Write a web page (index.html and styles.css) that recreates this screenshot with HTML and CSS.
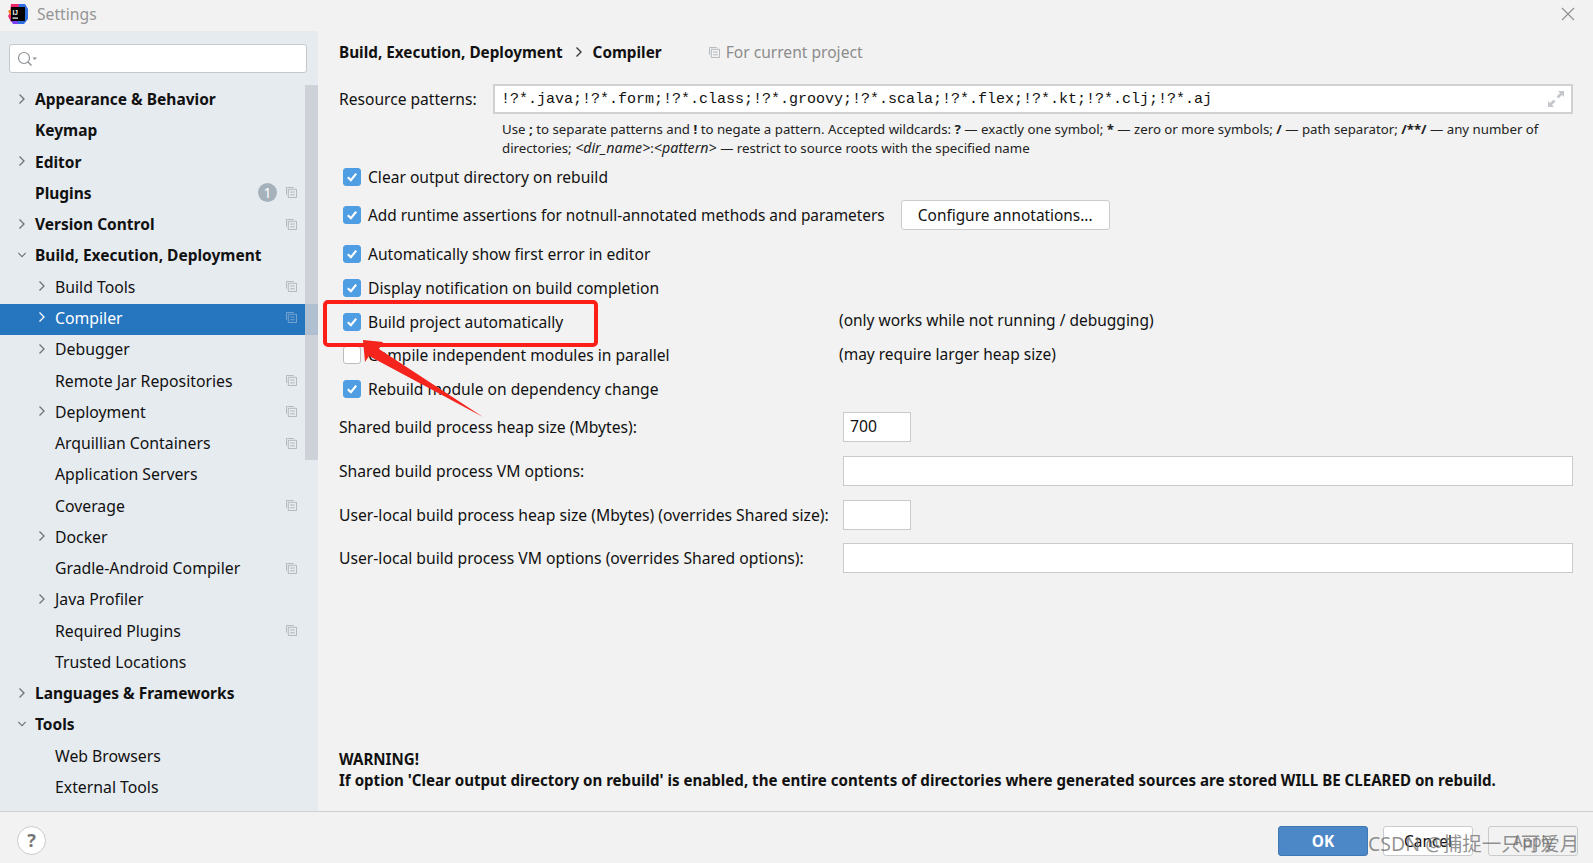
FILE: index.html
```html
<!DOCTYPE html>
<html lang="en">
<head>
<meta charset="utf-8">
<title>Settings</title>
<link rel="stylesheet" href="styles.css">
</head>
<body>
<svg class="defs" width="0" height="0" aria-hidden="true">
  <symbol id="copy" viewBox="0 0 12 12"><path d="M.5 8.5V.5h8" fill="none" stroke="currentColor"/><path d="M2.5 2.5h9v9h-9z" fill="none" stroke="currentColor"/><path d="M4.5 5.5h5M4.5 8.5h5" stroke="currentColor"/></symbol>
  <symbol id="right" viewBox="0 0 10 12"><path d="M2.5 1.5 7 6l-4.500 4.500" fill="none" stroke="currentColor" stroke-width="1.300"/></symbol>
  <symbol id="down" viewBox="0 0 12 10"><path d="M1.500 2.500 6 7l4.500-4.500" fill="none" stroke="currentColor" stroke-width="1.300"/></symbol>
  <symbol id="tick" viewBox="0 0 18 18"><path d="M4.800 9.200 7.900 12.200 13.200 5.600" fill="none" stroke="#fff" stroke-width="2.200"/></symbol>
</svg>
<div class="window">
  <header class="titlebar">
    <svg class="logo" viewBox="0 0 20 20" width="20" height="20">
      <path d="M3 0h8l2 3-3 15H3L0 12l2-3z" fill="#f0246c"/>
      <path d="M11 0h6l3 5v10l-4 5H8z" fill="#2f6fe0"/>
      <path d="M0 7l4-2v9z" fill="#f97a12"/>
      <path d="M2 15h8v5H5z" fill="#7a3df0"/>
      <rect x="3" y="3" width="14" height="14" fill="#000"/>
      <text x="4.500" y="10.500" class="logo-text">IJ</text>
      <rect x="4.500" y="13.500" width="5.500" height="1.200" fill="#fff"/>
    </svg>
    <span class="title">Settings</span>
    <svg class="close" viewBox="0 0 14 14" width="14" height="14"><path d="M1 1l12 12M13 1 1 13" stroke="#8f8f8f" stroke-width="1.100" fill="none"/></svg>
  </header>
  <div class="body">
    <aside class="sidebar">
      <div class="search">
        <svg viewBox="0 0 22 16" width="22" height="16"><circle cx="7" cy="7" r="5.500" fill="none" stroke="#8b9298" stroke-width="1.200"/><path d="M11 11l3.500 3.500" stroke="#8b9298" stroke-width="1.400"/><path d="M15.500 6.500h4.500l-2.250 2.500z" fill="#8b9298"/></svg>
      </div>
      <div class="tree">
        <div class="scrollbar"></div>
        <div class="row l0 bold"><svg class="arrow"><use href="#right"/></svg><span class="name">Appearance &amp; Behavior</span></div>
        <div class="row l0 bold"><span class="name">Keymap</span></div>
        <div class="row l0 bold"><svg class="arrow"><use href="#right"/></svg><span class="name">Editor</span></div>
        <div class="row l0 bold"><span class="name">Plugins</span><span class="badge">1</span><svg class="cp"><use href="#copy"/></svg></div>
        <div class="row l0 bold"><svg class="arrow"><use href="#right"/></svg><span class="name">Version Control</span><svg class="cp"><use href="#copy"/></svg></div>
        <div class="row l0 bold"><svg class="arrow"><use href="#down"/></svg><span class="name">Build, Execution, Deployment</span></div>
        <div class="row l1"><svg class="arrow"><use href="#right"/></svg><span class="name">Build Tools</span><svg class="cp"><use href="#copy"/></svg></div>
        <div class="row l1 selected"><svg class="arrow"><use href="#right"/></svg><span class="name">Compiler</span><svg class="cp"><use href="#copy"/></svg></div>
        <div class="row l1"><svg class="arrow"><use href="#right"/></svg><span class="name">Debugger</span></div>
        <div class="row l1"><span class="name">Remote Jar Repositories</span><svg class="cp"><use href="#copy"/></svg></div>
        <div class="row l1"><svg class="arrow"><use href="#right"/></svg><span class="name">Deployment</span><svg class="cp"><use href="#copy"/></svg></div>
        <div class="row l1"><span class="name">Arquillian Containers</span><svg class="cp"><use href="#copy"/></svg></div>
        <div class="row l1"><span class="name">Application Servers</span></div>
        <div class="row l1"><span class="name">Coverage</span><svg class="cp"><use href="#copy"/></svg></div>
        <div class="row l1"><svg class="arrow"><use href="#right"/></svg><span class="name">Docker</span></div>
        <div class="row l1"><span class="name">Gradle-Android Compiler</span><svg class="cp"><use href="#copy"/></svg></div>
        <div class="row l1"><svg class="arrow"><use href="#right"/></svg><span class="name">Java Profiler</span></div>
        <div class="row l1"><span class="name">Required Plugins</span><svg class="cp"><use href="#copy"/></svg></div>
        <div class="row l1"><span class="name">Trusted Locations</span></div>
        <div class="row l0 bold"><svg class="arrow"><use href="#right"/></svg><span class="name">Languages &amp; Frameworks</span></div>
        <div class="row l0 bold"><svg class="arrow"><use href="#down"/></svg><span class="name">Tools</span></div>
        <div class="row l1"><span class="name">Web Browsers</span></div>
        <div class="row l1"><span class="name">External Tools</span></div>
      </div>
    </aside>
    <main class="content">
      <div class="crumbs">
        <b>Build, Execution, Deployment</b>
        <svg class="crumb-arrow"><use href="#right"/></svg>
        <b>Compiler</b>
        <svg class="cp crumb-cp"><use href="#copy"/></svg>
        <span class="muted">For current project</span>
      </div>
      <div class="resource">
        <label class="resource-label">Resource patterns:</label>
        <div class="resource-input"><span>!?*.java;!?*.form;!?*.class;!?*.groovy;!?*.scala;!?*.flex;!?*.kt;!?*.clj;!?*.aj</span>
          <svg viewBox="0 0 16 16" width="16" height="16"><path d="M16 0h-6l2 2-3.500 3.500 2 2L14 4l2 2zM0 16h6l-2-2 3.500-3.500-2-2L2 12l-2-2z" fill="#c4c8cc"/></svg>
        </div>
      </div>
      <p class="hint">Use <b>;</b> to separate patterns and <b>!</b> to negate a pattern. Accepted wildcards: <b>?</b> — exactly one symbol; <b>*</b> — zero or more symbols; <b>/</b> — path separator; <b>/**/</b> — any number of<br>directories; <i>&lt;dir_name&gt;</i>:<i>&lt;pattern&gt;</i> — restrict to source roots with the specified name</p>
      <div class="check c1"><span class="box on"><svg><use href="#tick"/></svg></span><span>Clear output directory on rebuild</span></div>
      <div class="check c2"><span class="box on"><svg><use href="#tick"/></svg></span><span class="long">Add runtime assertions for notnull-annotated methods and parameters</span><button class="btn configure">Configure annotations...</button></div>
      <div class="check c3"><span class="box on"><svg><use href="#tick"/></svg></span><span>Automatically show first error in editor</span></div>
      <div class="check c4"><span class="box on"><svg><use href="#tick"/></svg></span><span>Display notification on build completion</span></div>
      <div class="check c4"><span class="box on"><svg><use href="#tick"/></svg></span><span class="lab">Build project automatically</span><span class="note">(only works while not running / debugging)</span></div>
      <div class="check c4"><span class="box"></span><span class="lab">Compile independent modules in parallel</span><span class="note">(may require larger heap size)</span></div>
      <div class="check c4"><span class="box on"><svg><use href="#tick"/></svg></span><span>Rebuild module on dependency change</span></div>
      <div class="field f1"><label>Shared build process heap size (Mbytes):</label><div class="input small">700</div></div>
      <div class="field"><label>Shared build process VM options:</label><div class="input"></div></div>
      <div class="field"><label>User-local build process heap size (Mbytes) (overrides Shared size):</label><div class="input small"></div></div>
      <div class="field"><label>User-local build process VM options (overrides Shared options):</label><div class="input"></div></div>
      <div class="warning"><b>WARNING!</b><br><b>If option 'Clear output directory on rebuild' is enabled, the entire contents of directories where generated sources are stored WILL BE CLEARED on rebuild.</b></div>
    </main>
  </div>
  <footer class="footer">
    <span class="help">?</span>
    <div class="buttons">
      <button class="btn primary">OK</button>
      <button class="btn cancel">Cancel</button>
      <button class="btn apply">Apply</button>
    </div>
  </footer>
</div>
<div class="red-box"></div>
<svg class="red-arrow" viewBox="0 0 140 90" width="140" height="90"><path d="M5 4 25 6 21 13 125 81 11 20 7 26z" fill="#f5241c"/></svg>
<div class="watermark">CSDN @捕捉一只可爱月</div>
</body>
</html>
```
FILE: styles.css
```css
* { box-sizing: border-box; }
html, body { margin: 0; height: 100%; overflow: hidden; }
body { font-family: "Noto Sans", "Noto Sans CJK SC", sans-serif; font-size: 15.600px; color: #111; background: #f2f2f2; position: relative; }
b { font-weight: 700; }
.defs { position: absolute; }
.window { width: 1593px; height: 863px; display: flex; flex-direction: column; }

.titlebar { height: 31px; flex: none; display: flex; align-items: center; padding: 0 18px 3px 8px; }
.logo-text { font: 700 6.500px "Liberation Sans", sans-serif; fill: #fff; }
.title { margin-left: 9px; color: #969696; font-size: 15.700px; }
.close { margin-left: auto; }

.body { flex: 1; display: flex; min-height: 0; }
.sidebar { width: 318px; flex: none; background: #e6ebf0; padding-top: 13px; overflow: hidden; }
.search { height: 29px; margin: 0 11px 0 9px; background: #fff; border: 1px solid #c4c8cc; border-radius: 3px; display: flex; align-items: center; padding-left: 7px; }
.tree { position: relative; margin-top: 12px; }
.scrollbar { position: absolute; top: 0; right: 0; width: 13px; height: 375px; background: #c9ced3; z-index: 2; opacity: .85; }
.row { height: 31.270px; display: flex; align-items: center; position: relative; font-size: 15.800px; padding-right: 21px; padding-bottom: 3px; }
.row .name { position: absolute; top: calc(50% - 1.500px); transform: translateY(-50%); white-space: nowrap; }
.row .arrow { position: absolute; width: 10px; height: 12px; top: 7.500px; color: #6e7276; }
.row.l0 .name { left: 35px; }
.row.l0 .arrow { left: 17px; }
.row.l1 .name { left: 55px; }
.row.l1 .arrow { left: 37px; }
.row.bold { font-weight: 700; font-size: 15.500px; }
.row .cp { margin-left: auto; }
.row.selected { background: #2675bf; color: #fff; }
.row.selected .arrow { color: #fff; }
.row.selected .cp { color: #7ea9d3; }
.cp { width: 11px; height: 11px; color: #aeb4b9; flex: none; }
.badge { position: absolute; right: 41px; top: 4.500px; width: 19px; height: 19px; border-radius: 50%; background: #a6b2bb; color: #fff; font-size: 14px; font-weight: 400; text-align: center; line-height: 19px; }

.content { flex: 1; padding: 0 20px 0 21px; min-width: 0; }
.crumbs { height: 42px; display: flex; align-items: center; white-space: nowrap; }
.crumbs b { font-size: 15.300px; }
.crumb-arrow { width: 10px; height: 12px; margin: 0 9px 0 11px; color: #333; }
.crumb-cp { margin: 0 6px 0 47px; }
.muted { color: #8c8c8c; }
.resource { display: flex; align-items: center; height: 30px; margin-top: 11px; }
.resource-label { width: 154px; flex: none; }
.resource-input { flex: 1; height: 30px; background: #fff; border: 2px solid #cfd1d3; display: flex; align-items: center; justify-content: space-between; padding: 0 7px 0 6px; font: 15px "Liberation Mono", monospace; white-space: nowrap; }
.hint { margin: 6px 0 0 163px; font-size: 13.250px; line-height: 19px; color: #222; white-space: nowrap; height: 38px; }
.hint i { font-size: 14.200px; line-height: 1; }
.check { display: flex; align-items: center; white-space: nowrap; padding-left: 4px; }
.c1 { height: 29px; margin-top: 4px; }
.c2 { height: 39px; margin-top: 4.500px; }
.c3 { height: 34px; margin-top: 2.500px; }
.c4 { height: 33.700px; }
.box { width: 18px; height: 18px; flex: none; border-radius: 3px; background: #fff; border: 1px solid #b9bcbf; margin-right: 7px; }
.box.on { background: #4f9ee3; border-color: #4f9ee3; }
.box svg { display: block; width: 18px; height: 18px; margin: -1px; }
.long { font-size: 15.400px; }
.lab { width: 471px; flex: none; }
.note { position: relative; top: -1.500px; font-size: 15.500px; }
.field { display: flex; align-items: center; justify-content: flex-start; height: 30px; margin-top: 13.700px; white-space: nowrap; font-size: 15.700px; }
.field label { width: 504px; flex: none; }
.f1 { margin-top: 6.500px; }
.input { flex: 1; height: 30px; background: #fff; border: 1px solid #c8cacc; padding: 0 6px; line-height: 27px; }
.input.small { flex: none; width: 68px; }
.warning { margin-top: 175.500px; font-size: 15.100px; line-height: 21.400px; white-space: nowrap; }

.btn { font-family: inherit; font-size: 15.400px; border: 1px solid #c9cbcd; border-radius: 3px; background: #fff; color: #111; height: 30px; padding: 0; }
.configure { width: 209px; margin-left: 16px; }
.footer { height: 52px; flex: none; border-top: 1px solid #cdd0d3; display: flex; align-items: flex-start; padding: 14px 15px 0 17px; }
.help { width: 29px; height: 29px; border-radius: 50%; background: #fff; border: 1px solid #c9cbcd; color: #777; font-weight: 700; font-size: 18px; text-align: center; line-height: 26px; }
.buttons { margin-left: auto; display: flex; gap: 15px; }
.buttons .btn { width: 90px; }
.primary { background: #4c87c7; border-color: #3f77b3; color: #fff; font-weight: 700; }
.apply { background: #f2f2f2; color: #8c8c8c; }

.red-box { position: absolute; left: 323px; top: 300px; width: 275px; height: 47px; border: 4px solid #fb1f17; border-radius: 5px; }
.red-arrow { position: absolute; left: 358px; top: 336px; }
.watermark { position: absolute; left: 1368px; top: 828px; font-size: 19.500px; color: rgba(110,110,110,.75); white-space: nowrap; }
```
